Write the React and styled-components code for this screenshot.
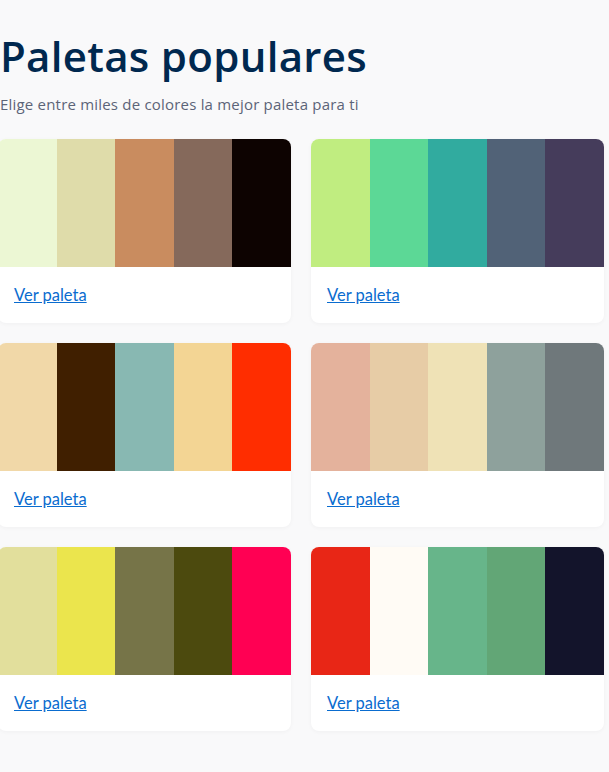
import React from 'react';
import styled, { createGlobalStyle } from 'styled-components';

const GlobalStyle = createGlobalStyle`
  body {
    margin: 0;
    background: #f9f9fa;
    font-family: Lato, "Noto Sans", sans-serif;
  }
`

const Page = styled.div`
  margin-left: -2px;
  padding-top: 28px;
  padding-bottom: 40px;
`

const Title = styled.h1`
  margin: 0 0 0 2px;
  font-family: "Open Sans", sans-serif;
  font-size: 42px;
  line-height: 56px;
  font-weight: 600;
  letter-spacing: 0.3px;
  color: #00284f;
`

const Subtitle = styled.p`
  margin: 10px 0 25px 2px;
  font-family: "Open Sans", sans-serif;
  font-size: 15px;
  line-height: 20px;
  letter-spacing: 0.2px;
  color: #5c6478;
`

const Grid = styled.div`
  display: grid;
  grid-template-columns: 293px 293px;
  gap: 20px;
`

const Card = styled.div`
  background: #fff;
  border-radius: 8px;
  overflow: hidden;
  box-shadow: 0 1px 4px rgba(0, 0, 0, 0.04);
`

const Strip = styled.div`
  display: grid;
  grid-template-columns: repeat(5, 1fr);
  height: 128px;
`

const Swatch = styled.div`
  background: ${p => p.$color};
`

const Footer = styled.div`
  height: 56px;
  display: flex;
  align-items: center;
  padding: 0 16px;
`

const Link = styled.a`
  font-size: 16.5px;
  color: #0a6ccf;
  text-decoration: underline;
  cursor: pointer;
`

const palettes = [
  ['#ecf7d4', '#dfdcaa', '#c98c5f', '#85695b', '#0d0301'],
  ['#c0ed80', '#5cd896', '#31ab9f', '#516277', '#453c5b'],
  ['#f1d8a8', '#401f00', '#88b8b2', '#f3d594', '#ff2d00'],
  ['#e4b29c', '#e7cca6', '#efe2b6', '#8ea19c', '#6f787b'],
  ['#e2df9c', '#ebe54d', '#767448', '#4c4a0e', '#ff0053'],
  ['#e82616', '#fffbf5', '#67b58a', '#62a676', '#13142b'],
];

const App = () => {
  return (
    <Page>
      <GlobalStyle />
      <Title>Paletas populares</Title>
      <Subtitle>Elige entre miles de colores la mejor paleta para ti</Subtitle>
      <Grid>
        {palettes.map((colors, i) => (
          <Card key={i}>
            <Strip>
              {colors.map(c => <Swatch key={c} $color={c} />)}
            </Strip>
            <Footer>
              <Link>Ver paleta</Link>
            </Footer>
          </Card>
        ))}
      </Grid>
    </Page>
  );
}

export default App;
